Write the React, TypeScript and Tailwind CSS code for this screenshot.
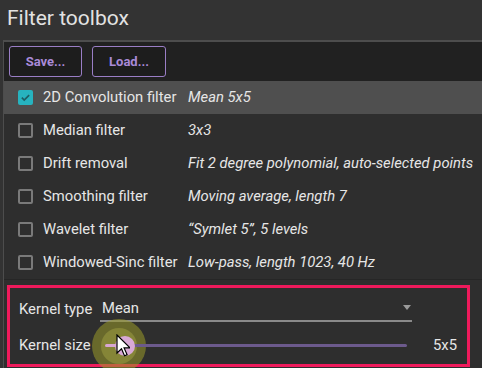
import React from "react"

const filters = [
  { name: "2D Convolution filter", detail: "Mean 5x5", checked: true },
  { name: "Median filter", detail: "3x3", checked: false },
  { name: "Drift removal", detail: "Fit 2 degree polynomial, auto-selected points", checked: false },
  { name: "Smoothing filter", detail: "Moving average, length 7", checked: false },
  { name: "Wavelet filter", detail: "\u201cSymlet 5\u201d, 5 levels", checked: false },
  { name: "Windowed-Sinc filter", detail: "Low-pass, length 1023, 40 Hz", checked: false },
]

function Checkbox({ checked }: { checked: boolean }) {
  if (checked) {
    return (
      <div className="flex h-[15px] w-[15px] shrink-0 items-center justify-center rounded-[2px] bg-[#27b3bf]">
        <svg width="11" height="11" viewBox="0 0 12 12" fill="none">
          <path d="M2 6.2l2.6 2.6L10 3.4" stroke="#1d5d63" strokeWidth="1.8" />
        </svg>
      </div>
    )
  }
  return <div className="h-[15px] w-[15px] shrink-0 rounded-[2px] border-2 border-[#7a7a7a]" />
}

function ToolButton({ label, width }: { label: string; width: string }) {
  return (
    <button
      className={`h-[31px] ${width} rounded-[3px] border-[1.5px] border-[#9a7ec6] bg-[#1d1d1d] text-[13px] font-bold text-[#a98ad8]`}
    >
      {label}
    </button>
  )
}

export default function App() {
  return (
    <div className="relative h-[368px] w-[482px] overflow-hidden bg-[#333333] font-['Roboto',sans-serif]">
      <h1 className="h-[40px] pl-[7px] pt-[3px] text-[21px] leading-[30px] text-[#e2e2e2]">
        Filter toolbox
      </h1>

      <div className="ml-[3px] border-l border-t-2 border-[#4d4d4d] bg-[#2e2e2e]">
        <div className="flex h-[39px] items-center gap-[10px] bg-[#212121] pl-[5px]">
          <ToolButton label="Save..." width="w-[73px]" />
          <ToolButton label="Load..." width="w-[74px]" />
        </div>

        <ul className="border-b border-[#262626]">
          {filters.map((f) => (
            <li
              key={f.name}
              className={`flex h-[33px] items-center pl-[14px] text-[14.8px] text-[#e6e6e6] ${
                f.checked ? "bg-[#4f4f4f]" : ""
              }`}
            >
              <Checkbox checked={f.checked} />
              <span className="ml-[10px] w-[145px] shrink-0 whitespace-nowrap">{f.name}</span>
              <span className="whitespace-nowrap italic">{f.detail}</span>
            </li>
          ))}
        </ul>

        <div className="h-[90px] pl-[3px] pt-[5px]">
          <div className="flex h-[82px] w-[463px] flex-col justify-center gap-[12px] border-[3px] border-[#ef1a5c] pl-[9px] pr-[8px] text-[14.8px] text-[#e6e6e6]">
            <div className="flex items-center">
              <span className="w-[81px] shrink-0">Kernel type</span>
              <div className="relative flex h-[27px] w-[312px] items-center border-b-2 border-[#8a8a8a] pl-[2px]">
                <span>Mean</span>
                <svg className="absolute right-[1px] top-[10px]" width="8" height="5" viewBox="0 0 8 5">
                  <path d="M0 0h8L4 5z" fill="#9a9a9a" />
                </svg>
              </div>
            </div>
            <div className="flex items-center">
              <span className="w-[86px] shrink-0">Kernel size</span>
              <div className="relative flex h-[20px] w-[302px] items-center">
                {/* cursor highlight behind the thumb */}
                <div className="pointer-events-none absolute left-[-13px] top-[-17px] flex h-[54px] w-[54px] items-center justify-center rounded-full bg-[#9a9a2a]/55">
                  <div className="h-[36px] w-[36px] rounded-full bg-[#b0b04a]/40" />
                </div>
                <div className="relative h-[3px] w-[22px] rounded-l-full bg-[#d8a6d2]" />
                <div className="relative h-[3px] flex-1 rounded-r-full bg-[#6c5a8c]" />
                <div className="absolute left-[10px] top-[0px] h-[20px] w-[20px] rounded-full bg-[#d9a9d6]" />
              </div>
              <span className="ml-auto pr-[2px]">5x5</span>
            </div>
          </div>
        </div>
      </div>

      <svg className="pointer-events-none absolute left-[116px] top-[334px]" width="14" height="24" viewBox="0 0 14 24">
        <path d="M1 1v18l4.5-4.2 3 7 2.6-1.1-3-6.8H14z" fill="#fff" stroke="#000" strokeWidth="1.2" />
      </svg>
    </div>
  )
}
